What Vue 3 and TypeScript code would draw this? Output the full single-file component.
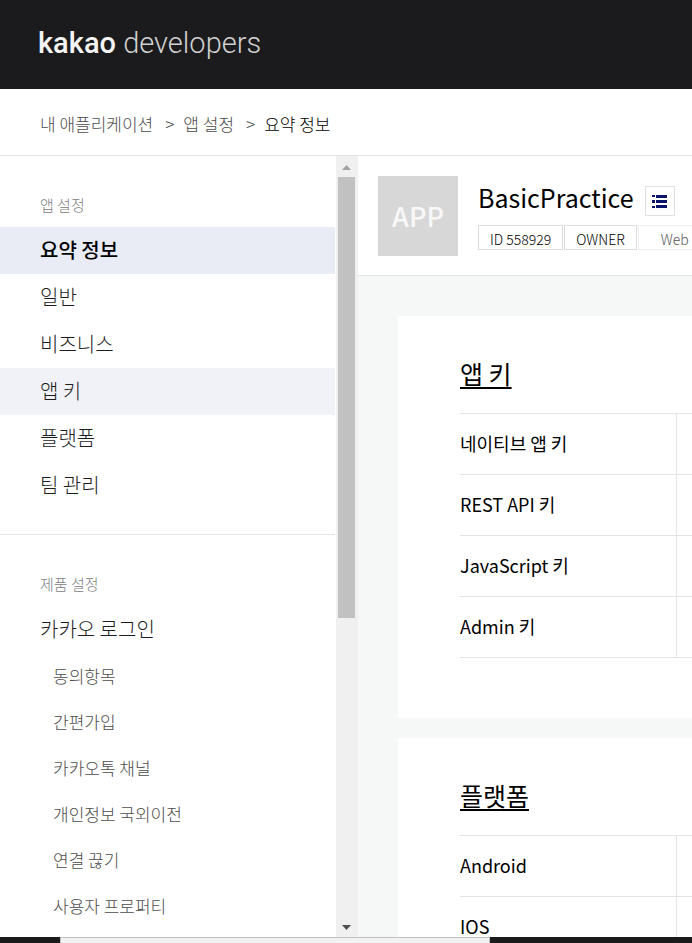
<script setup lang="ts">
interface MenuItem {
  label: string
  state?: 'active' | 'hover'
  sub?: boolean
}
interface MenuGroup {
  title: string
  items: MenuItem[]
}
interface Card {
  title: string
  rows: string[]
}

const crumbs: string[] = ['내 애플리케이션', '앱 설정']
const current = '요약 정보'

const groups: MenuGroup[] = [
  {
    title: '앱 설정',
    items: [
      { label: '요약 정보', state: 'active' },
      { label: '일반' },
      { label: '비즈니스' },
      { label: '앱 키', state: 'hover' },
      { label: '플랫폼' },
      { label: '팀 관리' },
    ],
  },
  {
    title: '제품 설정',
    items: [
      { label: '카카오 로그인' },
      { label: '동의항목', sub: true },
      { label: '간편가입', sub: true },
      { label: '카카오톡 채널', sub: true },
      { label: '개인정보 국외이전', sub: true },
      { label: '연결 끊기', sub: true },
      { label: '사용자 프로퍼티', sub: true },
    ],
  },
]

const cards: Card[] = [
  { title: '앱 키', rows: ['네이티브 앱 키', 'REST API 키', 'JavaScript 키', 'Admin 키'] },
  { title: '플랫폼', rows: ['Android', 'IOS'] },
]
</script>

<template>
  <div class="page">
    <header class="top">
      <a class="logo" href="#"><b>kakao</b> <span>developers</span></a>
    </header>

    <nav class="crumbs">
      <template v-for="c in crumbs" :key="c">
        <a href="#">{{ c }}</a>
        <span class="sep">&gt;</span>
      </template>
      <a class="current" href="#">{{ current }}</a>
    </nav>

    <div class="body">
      <nav class="side">
        <section v-for="g in groups" :key="g.title" class="group">
          <h2>{{ g.title }}</h2>
          <ul>
            <li v-for="i in g.items" :key="i.label">
              <a href="#" :class="['item', i.state, { sub: i.sub }]">{{ i.label }}</a>
            </li>
          </ul>
        </section>
      </nav>

      <div class="scroll" aria-hidden="true">
        <div class="arrow">
          <svg width="9" height="5" viewBox="0 0 9 5"><path d="M0 5 4.500 0 9 5z" fill="#a3a3a3" /></svg>
        </div>
        <div class="thumb"></div>
        <div class="rest"></div>
        <div class="arrow">
          <svg width="9" height="5" viewBox="0 0 9 5"><path d="M0 0h9L4.500 5z" fill="#505050" /></svg>
        </div>
      </div>

      <main class="main">
        <div class="app">
          <div class="thumbnail">APP</div>
          <div class="info">
            <div class="name-row">
              <h1>BasicPractice</h1>
              <button type="button" class="list" aria-label="앱 목록">
                <svg width="15" height="13" viewBox="0 0 15 13" fill="#0a1468" shape-rendering="crispEdges">
                  <path d="M0 0h3v2H0zM0 5h3v3H0zM0 11h3v2H0zM4 0h11v3H4zM4 5h11v3H4zM4 10h11v3H4z" />
                </svg>
              </button>
            </div>
            <div class="badges">
              <span class="badge">ID 558929</span>
              <span class="badge">OWNER</span>
              <span class="badge web">Web</span>
            </div>
          </div>
        </div>

        <div class="cards">
          <section v-for="c in cards" :key="c.title" class="card">
            <h2><a href="#">{{ c.title }}</a></h2>
            <table>
              <tbody>
                <tr v-for="r in c.rows" :key="r">
                  <th scope="row">{{ r }}</th>
                  <td></td>
                </tr>
              </tbody>
            </table>
          </section>
        </div>
      </main>
    </div>

    <footer class="taskbar"><div class="task"></div></footer>
  </div>
</template>

<style>
body {
  margin: 0;
  background: #fff;
}
</style>

<style scoped>
.page {
  display: flex;
  flex-direction: column;
  height: 100vh;
  overflow: hidden;
  font-family: 'Noto Sans CJK KR', sans-serif;
  color: #111;
}
h1,
h2,
ul {
  margin: 0;
  padding: 0;
  list-style: none;
}
a {
  color: inherit;
  text-decoration: none;
}
.top {
  display: flex;
  flex: none;
  align-items: center;
  height: 89px;
  padding: 0 38px;
  box-sizing: border-box;
  background: #1b1b1d;
}
.logo {
  font-family: Roboto, sans-serif;
  font-size: 29px;
  line-height: 40px;
  padding-bottom: 4px;
  color: #f4f4f4;
}
.logo b {
  font-weight: 500;
}
.logo span {
  font-weight: 300;
  color: #d0d0d0;
}
.crumbs {
  display: flex;
  flex: none;
  align-items: center;
  height: 66px;
  padding: 0 40px;
  border-bottom: 1px solid #e4e4e4;
  font-size: 17px;
  line-height: 24px;
  font-weight: 300;
  color: #4c4c4c;
  white-space: nowrap;
}
.crumbs > * {
  margin-top: 4px;
}
.sep {
  padding: 0 9px 0 12px;
}
.current {
  color: #000;
}
.body {
  display: flex;
  flex: 1;
  min-height: 0;
}
.side {
  flex: none;
  width: 335px;
  margin-right: 1px;
  overflow: hidden;
}
.group {
  padding: 27px 0 25px;
  border-bottom: 1px solid #e4e4e4;
}
.group h2 {
  padding-left: 40px;
  font-size: 15px;
  line-height: 44px;
  font-weight: 300;
  color: #808080;
}
.item {
  display: block;
  padding: 0 0 1px 40px;
  font-size: 20px;
  line-height: 46px;
  font-weight: 300;
  color: #1c1c1c;
}
.item.active {
  font-weight: 500;
  color: #000;
  background: #e9ecf5;
}
.item.hover {
  background: #f1f2f7;
}
.item.sub {
  padding: 0 0 0 53px;
  font-size: 17px;
  line-height: 46px;
  color: #4c4c4c;
}
.scroll {
  display: flex;
  flex: none;
  flex-direction: column;
  width: 22px;
  background: #f0f0f0;
}
.arrow {
  display: flex;
  flex: none;
  align-items: center;
  justify-content: center;
  height: 21px;
  padding: 2px 1px 0 0;
  box-sizing: border-box;
}
.thumb {
  flex: 441;
  margin: 0 3px 0 2px;
  background: #c1c1c1;
}
.rest {
  flex: 298;
}
.main {
  flex: 1;
  min-width: 0;
  overflow: hidden;
  background: #f6f8f8;
}
.app {
  display: flex;
  gap: 20px;
  padding: 20px 0 19px 20px;
  border-bottom: 1px solid #e4e4e4;
  background: #fff;
}
.thumbnail {
  flex: none;
  width: 80px;
  height: 80px;
  font-size: 27px;
  line-height: 80px;
  font-weight: 500;
  text-align: center;
  color: #f8f8f8;
  background: #d7d7d7;
}
.info {
  min-width: 0;
}
.name-row {
  display: flex;
  gap: 11px;
  height: 49px;
}
h1 {
  font-size: 25px;
  line-height: 42px;
  font-weight: 400;
  color: #000;
}
.list {
  display: flex;
  align-items: center;
  justify-content: center;
  width: 30px;
  height: 30px;
  margin-top: 10px;
  padding: 0;
  border: 1px solid #e1e1e1;
  background: #fff;
}
.badges {
  display: flex;
  gap: 1px;
}
.badge {
  flex: none;
  height: 25px;
  padding: 0 11px;
  box-sizing: border-box;
  border: 1px solid #dcdcdc;
  font-size: 14px;
  line-height: 26px;
  font-weight: 300;
  color: #000;
}
.badge.web {
  padding: 0 22px;
  border-color: #eee;
  color: #555;
}
.cards {
  display: flex;
  flex-direction: column;
  gap: 20px;
  padding: 40px 0 0 40px;
}
.card {
  padding: 34px 0 60px 62px;
  background: #fff;
}
.card h2 {
  height: 63px;
  font-size: 25px;
  line-height: 46px;
  font-weight: 400;
  color: #000;
}
.card h2 a {
  text-decoration: underline;
  text-decoration-thickness: 2px;
  text-underline-offset: 3px;
  text-decoration-skip-ink: none;
}
table {
  width: 100%;
  border-collapse: collapse;
  table-layout: fixed;
}
tr {
  height: 61px;
  border: solid #e4e4e4;
  border-width: 1px 0;
}
th {
  width: 216px;
  padding: 0 0 2px;
  border-right: 1px solid #e4e4e4;
  font-size: 18px;
  line-height: 28px;
  font-weight: 400;
  text-align: left;
  color: #000;
}
td {
  padding: 0;
}
.taskbar {
  flex: none;
  height: 6px;
  padding-left: 60px;
  background: #1b1b1b;
}
.task {
  width: 430px;
  height: 6px;
  box-sizing: border-box;
  border: solid #c0c0c0;
  border-width: 1px 1px 0;
  background: #f2f2f2;
}
</style>
